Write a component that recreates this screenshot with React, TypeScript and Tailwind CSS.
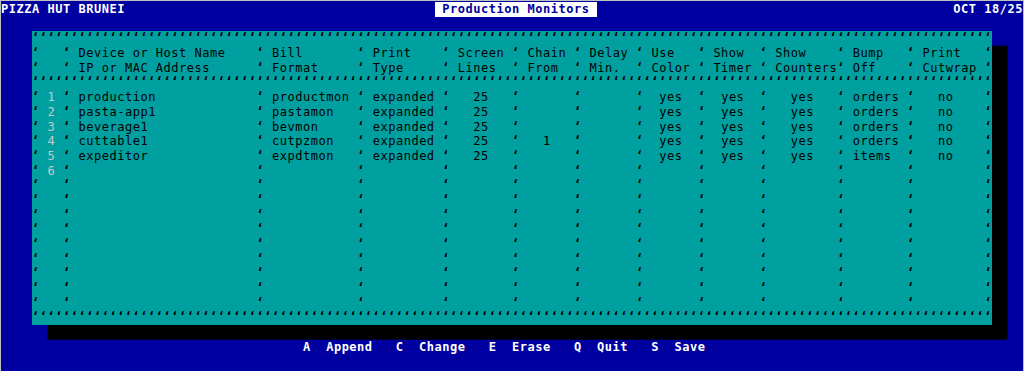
import React from 'react';

// 124 x 20 character panel, cells of 7.742 x 14.7 px
const COLS = 124;
const SEPS = [0, 4, 29, 42, 53, 62, 70, 78, 86, 94, 104, 113, 123];
const MARK = '\u2018';
const MARK_CLS = 'font-bold';

type Item = [number, string, string?];

const header1: Item[] = [
    [6, 'Device or Host Name'], [31, 'Bill'], [44, 'Print'], [55, 'Screen'], [64, 'Chain'],
    [72, 'Delay'], [80, 'Use'], [88, 'Show'], [96, 'Show'], [106, 'Bump'], [115, 'Print']
];
const header2: Item[] = [
    [6, 'IP or MAC Address'], [31, 'Format'], [44, 'Type'], [55, 'Lines'], [64, 'From'],
    [72, 'Min.'], [80, 'Color'], [88, 'Timer'], [96, 'Counters'], [106, 'Off'], [115, 'Cutwrap']
];

const monitors = [
    { host: 'production', bill: 'productmon', chain: '', bump: 'orders' },
    { host: 'pasta-app1', bill: 'pastamon', chain: '', bump: 'orders' },
    { host: 'beverage1', bill: 'bevmon', chain: '', bump: 'orders' },
    { host: 'cuttable1', bill: 'cutpzmon', chain: '1', bump: 'orders' },
    { host: 'expeditor', bill: 'expdtmon', chain: '', bump: 'items' }
];

const NUM = 'text-[#c8c8c8]';

const dataRows: Item[][] = monitors.map((m, i) => [
    [2, String(i + 1), NUM],
    [6, m.host], [31, m.bill], [44, 'expanded'], [57, '25'], [66, m.chain],
    [81, 'yes'], [89, 'yes'], [98, 'yes'], [106, m.bump], [117, 'no']
]);

const buildRuns = (items: Item[]) => {
    const cells = Array.from({ length: COLS }, (_, c) =>
        SEPS.includes(c) ? { ch: MARK, cls: MARK_CLS } : { ch: ' ', cls: '' }
    );
    items.forEach(([col, text, cls]) => {
        text.split('').forEach((ch, k) => {
            cells[col + k] = { ch, cls: cls || '' };
        });
    });
    const runs: { text: string; cls: string }[] = [];
    cells.forEach((cell) => {
        const last = runs[runs.length - 1];
        if (last && last.cls === cell.cls) last.text += cell.ch;
        else runs.push({ text: cell.ch, cls: cell.cls });
    });
    return runs;
};

const PanelRow = ({ items, dotted }: { items?: Item[]; dotted?: boolean }) => {
    if (dotted) {
        return <div className="h-[14.7px] whitespace-pre font-bold">{MARK.repeat(COLS)}</div>;
    }
    return (
        <div className="h-[14.7px] whitespace-pre">
            {buildRuns(items || []).map((run, i) => (
                <span key={i} className={run.cls}>{run.text}</span>
            ))}
        </div>
    );
};

const App = () => {
    const rows: React.ReactNode[] = [];
    rows.push(<PanelRow key="top" dotted />);
    rows.push(<PanelRow key="h1" items={header1} />);
    rows.push(<PanelRow key="h2" items={header2} />);
    rows.push(<PanelRow key="sep" dotted />);
    dataRows.forEach((r, i) => rows.push(<PanelRow key={`d${i}`} items={r} />));
    rows.push(<PanelRow key="d6" items={[[2, '6', NUM]]} />);
    for (let i = 0; i < 9; i++) rows.push(<PanelRow key={`e${i}`} items={[]} />);
    rows.push(<PanelRow key="bottom" dotted />);

    return (
        <div className="h-[371px] w-[1024px] overflow-hidden border-x border-t border-[#c0c0c0] bg-[#0000a0] pt-px font-['DejaVu_Sans_Mono',monospace] text-[12px] leading-[14.7px] tracking-[0.5173px]">
            <div className="flex h-[14.7px] justify-between whitespace-pre font-bold text-white">
                <div className="flex">
                    <span className="w-[433.55px]">PIZZA HUT BRUNEI</span>
                    <span className="w-[162.58px] bg-white text-[#0000a0]"> Production Monitors </span>
                </div>
                <span>OCT 18/25</span>
            </div>
            <div className="h-[14.7px]" />
            <div className="ml-[30.97px] h-[294px] w-[960px] bg-[#00a0a0] text-black shadow-[15.48px_14.7px_0_0_#000]">
                {rows}
            </div>
            <div className="h-[14.7px]" />
            <div className="ml-[301.93px] h-[14.7px] whitespace-pre font-bold text-white">
                A  Append   C  Change   E  Erase   Q  Quit   S  Save
            </div>
        </div>
    );
};

export default App;
